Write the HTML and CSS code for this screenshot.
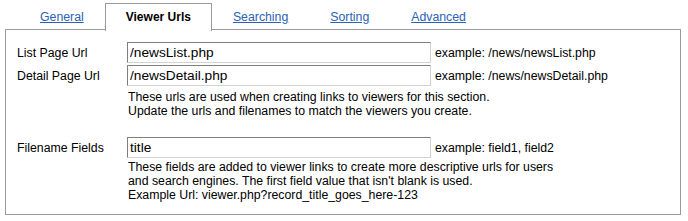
FILE: index.html
```html
<!DOCTYPE html>
<html>
<head>
<meta charset="utf-8">
<link rel="stylesheet" href="styles.css">
</head>
<body>
<div class="tabs">
  <a class="tab" href="#">General</a>
  <span class="tab active">Viewer Urls</span>
  <a class="tab" href="#">Searching</a>
  <a class="tab" href="#">Sorting</a>
  <a class="tab" href="#">Advanced</a>
</div>
<div class="panel">
  <div class="row">
    <label class="label">List Page Url</label>
    <input class="text" type="text" value="/newsList.php">
    <span class="example">example: /news/newsList.php</span>
  </div>
  <div class="row row-next">
    <label class="label">Detail Page Url</label>
    <input class="text" type="text" value="/newsDetail.php">
    <span class="example">example: /news/newsDetail.php</span>
  </div>
  <div class="help">These urls are used when creating links to viewers for this section.<br>Update the urls and filenames to match the viewers you create.</div>
  <div class="row row-section">
    <label class="label">Filename Fields</label>
    <input class="text" type="text" value="title">
    <span class="example">example: field1, field2</span>
  </div>
  <div class="help help-tight">These fields are added to viewer links to create more descriptive urls for users<br>and search engines. The first field value that isn't blank is used.<br>Example Url: viewer.php?record_title_goes_here-123</div>
</div>
</body>
</html>
```
FILE: styles.css
```css
html, body {
  margin: 0;
  padding: 0;
  background: #ffffff;
}
body {
  font-family: "Liberation Sans", Arial, sans-serif;
  font-size: 12.3px;
  color: #000000;
}
.tabs {
  display: flex;
  padding: 3px 0 0 19px;
  height: 26px;
  position: relative;
  z-index: 1;
}
.tab {
  display: block;
  padding: 6px 20px 0 20px;
  height: 21px;
  line-height: 14px;
  border: 1px solid transparent;
  border-bottom: none;
  color: #2b62b6;
  text-decoration: underline;
  text-underline-offset: 1px;
  white-space: nowrap;
}
.tab.active {
  border-color: #9a9a9a;
  background: #ffffff;
  color: #000000;
  font-weight: bold;
  font-size: 12px;
  text-decoration: none;
}
.panel {
  margin-left: 5px;
  width: 674px;
  border: 1px solid #9a9a9a;
  padding: 12px 0 12px 0;
  box-sizing: content-box;
}
.row {
  display: flex;
  align-items: baseline;
  height: 21px;
}
.row-next {
  margin-top: 2px;
}
.row-section {
  margin-top: 19px;
}
.label {
  width: 110px;
  padding-left: 11px;
  line-height: 14px;
  flex: none;
}
.text {
  flex: none;
  box-sizing: border-box;
  width: 304px;
  height: 21px;
  margin: 0;
  padding: 0 2px;
  border: 1px solid;
  border-color: #7f7f7f #d2d2d2 #d2d2d2 #7f7f7f;
  font-family: "Liberation Sans", Arial, sans-serif;
  font-size: 13.7px;
  color: #000000;
  background: #ffffff;
  outline: none;
}
.example {
  margin-left: 4px;
  line-height: 14px;
  white-space: nowrap;
}
.help {
  margin: 4px 0 0 122px;
  line-height: 14px;
}
.help-tight {
  margin-top: 2px;
}
```
